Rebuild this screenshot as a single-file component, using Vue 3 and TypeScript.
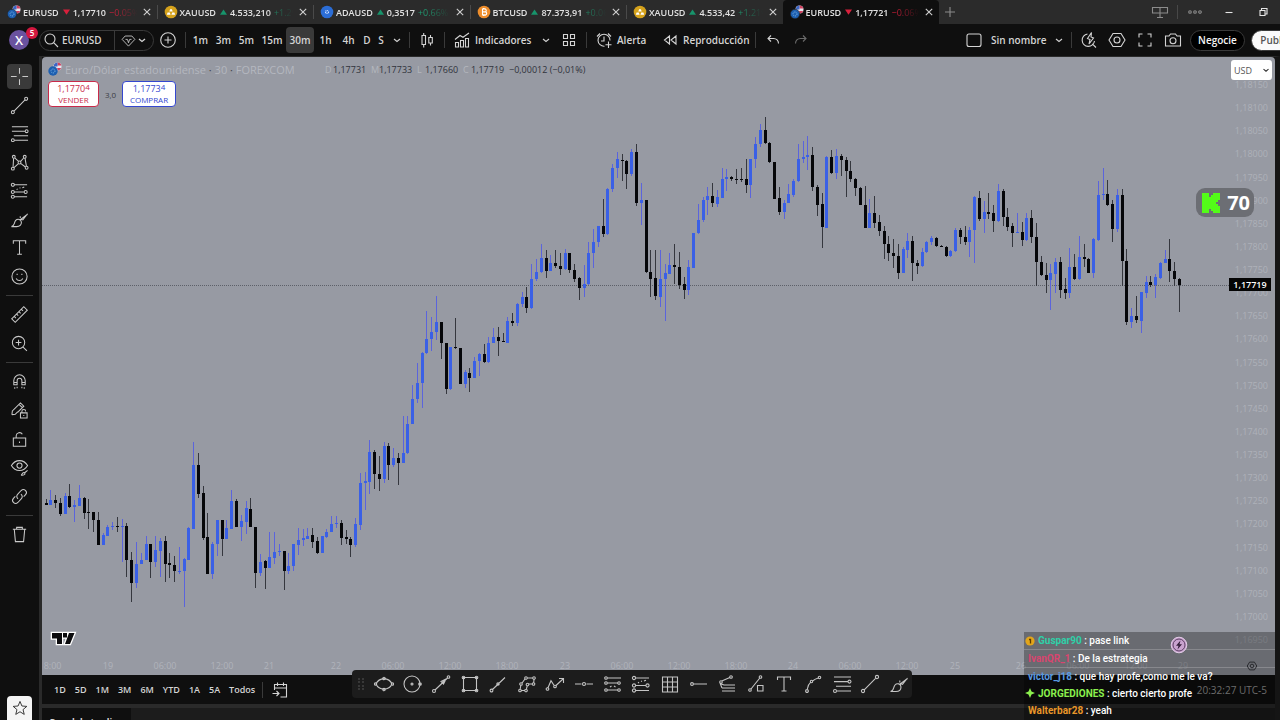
<script setup lang="ts">
interface Tab { symbol: string; up: boolean; price: string; change: string; kind: string; active?: boolean }
interface Candle { x: number; up: boolean; high: number; top: number; bottom: number; low: number }

const tabs: Tab[] = [
  { symbol: 'EURUSD', up: false, price: '1,17710', change: '−0.05%', kind: 'eur' },
  { symbol: 'XAUUSD', up: true, price: '4.533,210', change: '+1.2%', kind: 'gold' },
  { symbol: 'ADAUSD', up: true, price: '0,3517', change: '+0.66% A', kind: 'ada' },
  { symbol: 'BTCUSD', up: true, price: '87.373,91', change: '+0.06%', kind: 'btc' },
  { symbol: 'XAUUSD', up: true, price: '4.533,42', change: '+1.21%', kind: 'gold' },
  { symbol: 'EURUSD', up: false, price: '1,17721', change: '−0.06%', kind: 'eur', active: true },
]

const frames = ['1m', '3m', '5m', '15m', '30m', '1h', '4h', 'D', 'S']
const ranges = ['1D', '5D', '1M', '3M', '6M', 'YTD', '1A', '5A', 'Todos']

const ring = (x: number, y: number, r: number) =>
  `M${x - r} ${y}a${r} ${r} 0 1 0 ${2 * r} 0a${r} ${r} 0 1 0 ${-2 * r} 0`

const icons: Record<string, string> = {
  cross: 'M10 1v6M10 13v6M1 10h6M13 10h6',
  line: ring(3, 17, 1.6) + ring(17, 3, 1.6) + 'M4.2 15.8L15.8 4.2',
  fib: 'M2 3h17M2 7.6h14M4 12.3h15M5 17h14' + ring(17.5, 7.6, 1.5) + ring(3, 17, 1.5),
  pattern: ring(4, 4, 1.5) + ring(3, 16.5, 1.5) + ring(10, 10, 1.5) + ring(15.5, 4, 1.5) + ring(17.5, 15.5, 1.5) + 'M3.8 5.5L3.2 15M5 5.2l4 3.7M4.2 15.5l4.7-4.4M11 9l3.6-4M11.2 11l5 3.7M15.8 5.4l1.5 8.6',
  forecast: ring(3, 4, 1.6) + ring(3, 11.5, 1.6) + ring(3, 16.5, 1.6) + ring(16.5, 11.5, 1.6) + 'M5 4h13M5 11.5h10M5 16.5h13M7 9l1-.8M10 7.5l1-.4M13 7l2-.8',
  brush: 'M1.500 17.500c3.500-.5 2.500-4 4.500-6.500 2-2.300 6-1.300 6 2 0 3-2 4.500-5 4.500zM10.500 10.500l8-6M10.800 8.500V6.500M11 9.500l2.500.8L18.500 4',
  text: 'M3.5 6V3h13v3M10 3v14M7.500 17h5',
  smile: ring(10, 10, 8) + 'M6.500 12c1.500 3 5.500 3 7 0M7.500 7v1.500M12.500 7v1.500',
  ruler: 'M1.800 14.500L14.500 1.800l3.700 3.700L5.500 18.200zM4.500 12l1.700 1.700M7 9.500l1.700 1.700M9.500 7l1.700 1.700M12 4.500l1.700 1.700',
  zoom: ring(9, 9, 6.5) + 'M13.800 13.800l4 4M9 6v6M6 9h6',
  magnet: 'M4 13.500V9a6 6 0 0 1 12 0v4.500h-3.500V9a2.500 2.500 0 0 0-5 0v4.500zM4 11h3.500M12.500 11H16M5 16v1.500M7.500 15.500V17M12.500 15.500V17M15 16v1.500',
  pencilLock: 'M2 14.500l.5-4L11 2l3.500 3.500L8 12M2 14.500l3.500-.5L8 11.500M9.500 3.500L13 7M11 12.500h7v5.500h-7zM12.500 12.500v-1.500a2 2 0 0 1 4 0M14.500 14.800v1',
  unlock: 'M3.500 8.500h13v8.500h-13zM6.500 8.500V6a3.500 3.500 0 0 1 6.500-1.500M10 12v1.800',
  eye: 'M1.500 8c4-7 13-7 17 0-4 7-13 7-17 0z' + ring(10, 8, 2.7) + 'M11.500 18c1.500 0 1-2 2.500-2.500s2.500 1 1 2-2.500.6-3.500.5M15.500 15.500l3-2.500',
  link: 'M8.500 12.500c-1.800-1.500-1.800-3.500-.3-5l3.500-3.800c3-3 7.500 1.300 4.700 4.300l-2 2.200M11.500 7.500c1.800 1.500 1.800 3.500.3 5l-3.500 3.800c-3 3-7.500-1.300-4.700-4.300l2-2.200',
  trash: 'M3 4.500h14M7 4.500V2.500h6v2M4.500 4.500l1.200 13h8.600l1.200-13',
  star: 'M10 1.800l2.400 5.700 6.100.5-4.700 4 1.500 6-5.300-3.300L4.700 18l1.500-6-4.700-4 6.100-.5z',
  search: ring(9, 9, 5) + 'M12.700 12.700L17 17',
  gem: 'M5.500 4h9L18.500 8.500 10 17.500 1.500 8.500zM6 8.500h2.500l1.500 4.500 1.500-4.500H14',
  chevron: 'M7 9l3 2.500L13 9',
  plus: ring(10, 10, 7.3) + 'M10 6.500v7M6.500 10h7',
  candles: 'M5 5.500h3.500v9H5zM6.700 3v2.500M6.700 14.500V17.500M11.800 7.500h3.500v5.500h-3.500zM13.500 5v2.500M13.500 13v2.500',
  indicators: 'M3 9.500l5-4 3 1.800 6-4.300M3.500 12.500h3V17h-3zM8.500 10.500h3V17h-3zM13.500 8.500h3V17h-3z',
  grid: 'M4.500 4.500h4v4h-4zM11.500 4.500h4v4h-4zM4.500 11.500h4v4h-4zM11.500 11.500h4v4h-4z',
  alarm: 'M10.500 16.200A6 6 0 1 1 16 10.500M10 6.500V11H7M3 6.500l3-3M14 3.500l3 3M14.500 11.500v6.500M11.500 14.800h6',
  rewind: 'M9.500 6v8l-5-4zM16 6v8l-5-4z',
  undo: 'M15.500 13.500c0-3-2-5-5-5H5M8 5.500l-3 3 3 3',
  redo: 'M4.500 13.500c0-3 2-5 5-5H15M12 5.500l3 3-3 3',
  square: 'M5 4h10a2 2 0 0 1 2 2v8.500a2 2 0 0 1-2 2H5a2 2 0 0 1-2-2V6a2 2 0 0 1 2-2z',
  quick: 'M8.500 4A6.200 6.200 0 1 0 15.500 11M13.300 13.800l3.700 3.700M12.500 2.500L8.500 8.500l2.500 1-1 4.500 4.500-6-2.500-1z',
  hexagon: 'M6 3.500h8l4 6.500-4 6.500H6L2 10z' + ring(10, 10, 3),
  full: 'M4 7.500V4h3.500M12.500 4H16v3.500M16 12.500V16h-3.500M7.500 16H4v-3.500',
  camera: 'M2.500 6h3.500l1.500-2h5L14 6h3.500v10h-15z' + ring(10, 10.800, 3),
  calendar: 'M4.500 10V4.500h12V17h-6M4.500 8h12M7.500 2.500v3.500M13.500 2.500v3.500M2.500 13.500h6.500M6.500 11l2.500 2.500L6.500 16',
  monitor: 'M2.500 5.500h15v5.500h-15zM10 5.500v10M7 15.500h6',
  ellipse: 'M2 10c3-6.800 13-6.800 16 0-3 6.800-13 6.800-16 0z' + ring(1.500, 10, 1.2) + ring(18.500, 10, 1.2) + ring(10, 4.500, 1.2) + ring(10, 15.500, 1.2),
  circle: ring(10, 10, 8) + ring(10, 10, 1) + ring(18, 10, 1.3),
  arrow: ring(3, 17, 1.500) + ring(17.500, 3, 1.300) + 'M4 16L16.500 4M10 7.500l5-2.500L12.500 10zM11.500 7.500l1 1',
  rect: 'M3.500 3.500h13v13h-13z' + ring(3.500, 3.500, 1.3) + ring(16.500, 3.500, 1.3) + ring(3.500, 16.500, 1.3) + ring(16.500, 16.500, 1.3),
  trend: ring(3.500, 16.500, 1.4) + ring(10, 10, 1.2) + 'M4.500 15.500L17 3.500',
  path: ring(3, 16.500, 1.3) + ring(4, 10, 1.3) + ring(9, 4, 1.3) + ring(17, 4, 1.3) + ring(16.500, 10, 1.3) + ring(9, 16.500, 1.3) + ring(10.500, 10.500, 1.3) + 'M4.500 16.500h3M3.200 15l.6-3.500M5 9l3-4M10.500 4h5M17 5.500l-.3 3M15 10h-3M10.200 12l-.8 3',
  zigzag: ring(2.500, 15, 1.3) + ring(10, 12.500, 1.3) + 'M3 13.700l3-7 3.300 5M11 11.500L18 5M14 4.500h4.500V9',
  hline: 'M1 10h6.500M12.500 10H19' + ring(10, 10, 1.5),
  longPos: ring(3, 4, 1.300) + ring(3, 9, 1.300) + ring(3, 16, 1.300) + ring(16, 9, 1.300) + ring(16, 16, 1.3) + 'M4.500 4H18M4.500 9h10M4.500 16h10M7 13l1.500-1M11 12l1.500 1',
  table: 'M2.500 3h15v15h-15zM7.500 3v15M12.500 3v15M2.500 8h15M2.500 13h15',
  hray: ring(3, 10, 1.4) + 'M4.500 10H18',
  gann: ring(4, 8, 1.3) + ring(14, 3, 1.3) + 'M4.800 7L12.800 3.500M3 9.500l4 1.500h11M5 14h13M5 17h13M3 9l2 5',
  shape: ring(4, 16, 1.300) + ring(14.500, 3, 1.300) + 'M5 15L13.800 4M11.500 11.500h5.500v5.500h-5.500z',
  curve: ring(4, 17, 1.4) + ring(8.500, 7.500, 1.2) + ring(16.500, 3.500, 1.2) + 'M4.200 15.500c.5-4 2-6 3.500-7.300M9.500 7c2-1.500 4-2.500 5.800-3',
}

const tools = [
  ['cross', 'line', 'fib', 'pattern', 'forecast', 'brush', 'text', 'smile'],
  ['ruler', 'zoom'],
  ['magnet', 'pencilLock', 'unlock', 'eye', 'link'],
  ['trash'],
]
const favorites = ['ellipse', 'circle', 'arrow', 'rect', 'trend', 'path', 'zigzag', 'hline', 'longPos', 'forecast', 'table', 'hray', 'gann', 'shape', 'text', 'curve', 'fib', 'line', 'brush']

const priceLabels = Array.from({ length: 25 }, (_, i) => '1,' + String(18150 - i * 50))

const view = { left: 42, top: 57, width: 1233, height: 618 }
const times: [string, number][] = [
  ['18:00', 50], ['19', 108], ['06:00', 165], ['12:00', 222], ['21', 269], ['22', 336], ['06:00', 393], ['12:00', 450],
  ['18:00', 507], ['23', 565], ['06:00', 622], ['12:00', 679], ['18:00', 736], ['24', 793], ['06:00', 850], ['12:00', 907],
  ['25', 955], ['26', 1021], ['06:00', 1078], ['12:00', 1136], ['29', 1183],
]
const share = (x: number) => ((x - view.left) / view.width) * 100 + '%'

// One entry per half hour: direction, high, body top, body bottom, low.
const series = `
d499,503,505,505 u490,500,505,505 d495,500,503,508 d498,503,514,516 u493,496,514,514 d484,496,507,508 u500,505,507,522 u485,498,506,506
d497,498,513,519 d499,512,513,529 d512,512,520,532 d512,520,545,545 u533,535,545,545 u525,527,536,536 u522,526,527,530 d517,526,527,532
u519,526,527,562 d523,526,560,577 d552,560,583,602 u542,564,583,588 u553,560,564,564 u536,544,560,560 d544,544,562,578 u536,550,562,567
u538,541,551,577 d536,541,564,582 d553,563,565,578 d556,565,571,582 u547,571,572,574 u558,559,571,607 u527,528,560,560 u442,465,529,529
d453,465,494,498 d486,493,538,540 d513,537,574,574 u542,544,574,579 u520,520,544,556 d520,520,539,556 u520,528,539,539 u490,501,529,529
d499,501,527,527 u515,521,527,541 u501,508,522,534 d498,509,527,527 d527,527,573,588 u554,562,573,576 d560,561,568,589 u532,557,568,568
u532,552,558,564 u544,551,552,556 d551,551,571,590 u553,566,571,574 u544,544,566,571 u528,540,545,555 u529,538,540,546 u528,536,539,539
d528,535,542,548 d537,541,553,554 u536,536,553,553 u529,532,537,538 u516,524,532,532 u516,523,524,528 d520,523,538,545 d530,537,539,544
d537,539,545,557 u518,524,545,547 u473,483,525,530 u472,481,483,510 u440,452,482,494 d450,452,474,489 d456,474,479,491 u442,446,479,483
d443,446,465,480 u448,458,465,467 d453,458,463,485 u416,453,463,463 u416,424,453,454 u385,399,424,424 u363,383,399,403 u352,353,383,408
u311,339,353,354 u317,332,339,351 u296,322,332,340 d322,322,343,359 d343,343,389,394 u347,347,389,390 d318,347,348,349 d348,348,384,384
u370,372,384,388 d368,373,378,392 u357,361,378,378 u353,354,361,376 d344,354,362,363 u337,343,362,363 u328,337,343,343 d327,337,341,356
d333,341,342,342 u317,321,343,343 d313,321,323,326 u303,304,323,326 u292,297,304,307 d287,297,308,313 u264,279,308,309 u259,272,279,281
u244,258,272,273 d250,258,271,278 u255,263,271,271 d250,263,266,268 d253,266,269,275 u249,253,269,270 d253,253,270,273 d264,270,279,282
d277,278,288,300 u265,284,288,297 u242,253,284,285 u229,242,253,268 u226,226,242,247 d199,226,234,237 u188,189,234,235 u164,168,189,192
u152,159,168,178 d154,160,161,181 d160,161,174,189 u149,152,174,176 d144,152,203,206 u183,200,203,225 d200,200,272,273 d250,272,279,297
d250,278,296,300 u250,279,297,307 u264,273,279,321 u253,265,274,274 d244,265,267,284 d252,267,285,289 d277,284,290,299 u260,267,290,295
u233,233,268,268 u204,220,233,234 u197,200,220,222 u187,196,200,215 d183,196,203,207 u190,197,204,207 u168,179,198,198 u169,177,179,191
d176,177,179,181 d169,179,180,184 d168,179,180,182 d159,179,185,193 u159,159,185,198 u137,144,159,168 u124,130,144,147 d117,130,143,144
d142,143,162,163 d162,162,199,199 d187,198,212,215 u200,203,212,219 u184,194,203,203 u179,181,195,197 u144,159,181,182 u141,157,159,163
u136,155,157,170 d147,155,187,191 d185,187,205,216 d193,204,227,248 u156,157,228,228 d150,157,173,174 u149,156,173,179 d154,156,160,176
d157,160,171,197 d161,171,179,182 d178,179,188,196 d187,188,205,205 d186,205,228,228 u199,213,228,228 d196,213,223,228 d215,222,231,236
d226,231,244,259 d236,244,253,261 d239,253,256,268 d244,256,273,279 u247,249,273,273 u233,241,250,258 d236,241,263,281 d260,263,266,274
u248,252,266,267 u241,242,252,253 u236,238,242,245 d237,238,246,247 d245,246,247,247 d246,247,256,257 u250,251,256,257 u228,230,251,252
d228,230,237,244 d226,237,242,245 u227,230,242,257 u196,197,230,263 d191,198,219,221 u201,212,219,233 d193,212,214,219 d205,213,221,232
u184,191,221,222 d189,191,217,226 d208,217,227,231 d223,226,233,247 u213,232,233,233 d222,232,240,246 u213,218,240,241 d210,218,237,243
d223,237,262,286 d256,262,275,276 d263,275,280,293 u264,273,280,310 u258,262,274,293 d257,262,290,298 d278,289,293,299 u248,267,293,298
d254,267,279,280 u236,257,279,280 d244,257,259,267 d258,259,273,273 u238,239,273,278 u181,195,240,241 u168,194,195,200 d180,194,205,206
d200,204,229,242 u189,195,229,232 d189,195,261,286 d249,261,322,325 u308,316,322,328 d296,316,320,323 u292,292,321,333 u276,282,293,298
d276,282,285,287 u274,277,285,298 u262,263,278,279 u250,259,263,263 d239,259,271,282 d262,271,279,286 d278,279,285,312`

const candles: Candle[] = series.trim().split(/\s+/).map((entry, i) => {
  const [high, top, bottom, low] = entry.slice(1).split(',').map(Number)
  return { x: Math.round(44.5 + i * 4.762), up: entry[0] === 'u', high, top, bottom, low }
})
const bodies = (up: boolean) =>
  candles.filter(c => c.up === up).map(c => `M${c.x} ${c.top}h3v${Math.max(1, c.bottom - c.top)}h-3z`).join('')
const wicks = (up: boolean) =>
  candles.filter(c => c.up === up).map(c => `M${c.x + 1} ${c.high}h1V${c.low}h-1z`).join('')

const chat = [
  { user: 'Guspar90', color: '#2fd0a8', text: 'pase link', badge: 'coin' },
  { user: 'IvanQR_1', color: '#d8456f', text: 'De la estrategia', badge: '' },
  { user: 'victor_j18', color: '#5b9be0', text: 'que hay profe,como me le va?', badge: '' },
  { user: 'JORGEDIONES', color: '#8bf04e', text: 'cierto cierto profe', badge: 'spark' },
  { user: 'Walterbar28', color: '#e8962a', text: 'yeah', badge: '' },
]
</script>

<template>
  <div class="app">
    <header class="tabbar">
      <nav class="tabs">
        <div v-for="(t, i) in tabs" :key="i" class="tab" :class="{ active: t.active }">
          <a href="#" class="tab-link">
            <svg class="coin" viewBox="0 0 14 14" aria-hidden="true">
              <template v-if="t.kind === 'eur'">
                <circle cx="9.500" cy="4.500" r="4" fill="#e9e4ee" />
                <path d="M9.500 .5a4 4 0 0 1 3.900 3H9.500zM9 6h4.200A4 4 0 0 1 10 8.500z" fill="#d0405e" />
                <path d="M6 2.500A4 4 0 0 1 9.500 .5v4H6z" fill="#3b66c4" />
                <circle cx="5" cy="9" r="4.700" fill="#1d5fb0" stroke="#202020" stroke-width=".6" />
                <circle cx="5" cy="9" r="2" fill="none" stroke="#79b4e8" stroke-dasharray="1 .8" />
              </template>
              <template v-else-if="t.kind === 'gold'">
                <circle cx="7" cy="7" r="6.300" fill="#d5a21c" />
                <path d="M5.300 6.500l.8-2.200h1.800l.8 2.200zM2.800 9.700l.8-2.300h2.200l.8 2.300zM7.400 9.700l.8-2.300h2.200l.8 2.300z" fill="#fff" />
              </template>
              <template v-else-if="t.kind === 'ada'">
                <circle cx="7" cy="7" r="6.300" fill="#2b6dd6" />
                <circle cx="7" cy="7" r="1.500" fill="none" stroke="#cfe0ff" stroke-width="1.200" stroke-dasharray="1 .6" />
              </template>
              <template v-else>
                <circle cx="7" cy="7" r="6.300" fill="#ef8e2c" />
                <path d="M5.500 4h2.300a1.400 1.400 0 0 1 0 2.900H5.500zM5.500 6.900h2.700a1.500 1.500 0 0 1 0 3H5.500zM6.500 3v1M6.500 10v1M8 3v1M8 10v1" fill="none" stroke="#fff" stroke-width="1.100" />
              </template>
            </svg>
            <b>{{ t.symbol }}</b>
            <svg class="tri" viewBox="0 0 8 6" aria-hidden="true">
              <path :d="t.up ? 'M0 6L4 0l4 6z' : 'M0 0h8L4 6z'" :fill="t.up ? '#17936b' : '#d8203c'" />
            </svg>
            <span class="tab-price">{{ t.price }}</span>
            <span class="tab-change" :class="t.up ? 'up' : 'down'">{{ t.change }}</span>
          </a>
          <button class="tab-close" aria-label="Cerrar">
            <svg viewBox="0 0 8 8"><path d="M.8 .8l6.400 6.400M7.200 .8L.8 7.200" /></svg>
          </button>
        </div>
      </nav>
      <button class="win add" aria-label="Nueva pestaña"><svg viewBox="0 0 20 20"><path d="M10 5v10M5 10h10" /></svg></button>
      <div class="spacer"></div>
      <button class="win layout" aria-label="Pantallas"><svg viewBox="0 0 20 20"><path :d="icons.monitor" /></svg></button>
      <i class="bar"></i>
      <button class="win dots" aria-label="Más">
        <svg viewBox="0 0 20 20"><path :d="ring(5, 10, 1.300) + ring(10, 10, 1.300) + ring(15, 10, 1.300)" /></svg>
      </button>
      <button class="win bright" aria-label="Minimizar"><svg viewBox="0 0 20 20"><path d="M6.500 10.500h7" /></svg></button>
      <button class="win bright" aria-label="Restaurar"><svg viewBox="0 0 20 20"><path d="M7 8.500h5v5H7zM8.500 8.500V6.500H14V12h-2" /></svg></button>
    </header>

    <div class="toolbar">
      <div class="avatar-cell">
        <button class="avatar" aria-label="Perfil">X</button>
        <span class="badge">5</span>
      </div>
      <div class="search">
        <button class="search-main"><svg class="ic" viewBox="0 0 20 20"><path :d="icons.search" /></svg><b>EURUSD</b></button>
        <button class="search-gem" aria-label="Opciones del símbolo">
          <svg class="ic" viewBox="0 0 20 20"><path :d="icons.gem" /></svg>
          <svg class="mini" viewBox="4 4 12 12"><path :d="icons.chevron" /></svg>
        </button>
      </div>
      <button class="sq" aria-label="Comparar"><svg class="ic" viewBox="0 0 20 20"><path :d="icons.plus" /></svg></button>
      <i class="sep"></i>
      <button v-for="f in frames" :key="f" class="tf" :class="['tf-' + f.length, { on: f === '30m' }]">{{ f }}</button>
      <button class="chev" aria-label="Intervalos"><svg class="ic" viewBox="0 0 20 20"><path :d="icons.chevron" /></svg></button>
      <i class="sep"></i>
      <button class="sq" aria-label="Velas"><svg class="ic" viewBox="0 0 20 20"><path :d="icons.candles" /></svg></button>
      <i class="sep"></i>
      <button class="labelled w-ind"><svg class="ic" viewBox="0 0 20 20"><path :d="icons.indicators" /></svg>Indicadores</button>
      <button class="chev" aria-label="Favoritos"><svg class="ic" viewBox="0 0 20 20"><path :d="icons.chevron" /></svg></button>
      <button class="sq" aria-label="Plantillas"><svg class="ic" viewBox="0 0 20 20"><path :d="icons.grid" /></svg></button>
      <i class="sep"></i>
      <button class="labelled w-alert"><svg class="ic" viewBox="0 0 20 20"><path :d="icons.alarm" /></svg>Alerta</button>
      <button class="labelled w-replay"><svg class="ic" viewBox="0 0 20 20"><path :d="icons.rewind" /></svg>Reproducción</button>
      <i class="sep"></i>
      <button class="sq" aria-label="Deshacer"><svg class="ic" viewBox="0 0 20 20"><path :d="icons.undo" /></svg></button>
      <button class="sq dim" aria-label="Rehacer"><svg class="ic" viewBox="0 0 20 20"><path :d="icons.redo" /></svg></button>
      <div class="spacer"></div>
      <button class="labelled w-name"><svg class="ic" viewBox="0 0 20 20"><path :d="icons.square" /></svg>Sin nombre</button>
      <button class="chev" aria-label="Diseños"><svg class="ic" viewBox="0 0 20 20"><path :d="icons.chevron" /></svg></button>
      <i class="sep"></i>
      <button class="sq" aria-label="Búsqueda rápida"><svg class="ic" viewBox="0 0 20 20"><path :d="icons.quick" /></svg></button>
      <button class="sq" aria-label="Ajustes"><svg class="ic" viewBox="0 0 20 20"><path :d="icons.hexagon" /></svg></button>
      <button class="sq" aria-label="Pantalla completa"><svg class="ic" viewBox="0 0 20 20"><path :d="icons.full" /></svg></button>
      <button class="sq" aria-label="Captura"><svg class="ic" viewBox="0 0 20 20"><path :d="icons.camera" /></svg></button>
      <button class="pill">Negocie</button>
      <button class="pill light">Publicar</button>
    </div>

    <div class="body">
      <aside class="tools">
        <div v-for="(group, gi) in tools" :key="gi" class="tool-group" :class="'g' + gi">
          <button v-for="name in group" :key="name" class="tool" :class="{ on: name === 'cross' }" :aria-label="name">
            <svg class="ic" viewBox="0 0 20 20"><path :d="icons[name]" /></svg>
          </button>
        </div>
        <div class="spacer"></div>
        <button class="tool fav" aria-label="Favoritos"><svg class="ic" viewBox="0 0 20 20"><path :d="icons.star" /></svg></button>
      </aside>

      <main class="main">
        <section class="chart">
          <svg class="plot" :viewBox="`${view.left} ${view.top} ${view.width} ${view.height}`" preserveAspectRatio="none" aria-hidden="true">
            <path d="M42 285.500H1230" stroke="#5d6069" stroke-dasharray="1 1" fill="none" />
            <path :d="wicks(true)" fill="#5b64dc" />
            <path :d="wicks(false)" fill="#35373e" />
            <path :d="bodies(true)" fill="#3a60e6" />
            <path :d="bodies(false)" fill="#06070a" />
          </svg>

          <div class="legend">
            <svg class="coin" viewBox="0 0 14 14" aria-hidden="true">
              <circle cx="9.500" cy="4.500" r="4" fill="#e9e4ee" />
              <path d="M9.500 .5a4 4 0 0 1 3.900 3H9.500zM9 6h4.200A4 4 0 0 1 10 8.500z" fill="#d0405e" />
              <path d="M6 2.500A4 4 0 0 1 9.500 .5v4H6z" fill="#3b66c4" />
              <circle cx="5" cy="9" r="4.700" fill="#1d5fb0" />
              <circle cx="5" cy="9" r="2" fill="none" stroke="#79b4e8" stroke-dasharray="1 .8" />
            </svg>
            <span class="title">Euro/Dólar estadounidense <i>·</i> 30 <i>·</i> FOREXCOM</span>
            <span class="ohlc"><em>D</em>1,17731</span>
            <span class="ohlc"><em>M</em>1,17733</span>
            <span class="ohlc"><em>L</em>1,17660</span>
            <span class="ohlc"><em>C</em>1,17719</span>
            <span class="delta">−0,00012 (−0,01%)</span>
          </div>
          <div class="trade">
            <button class="order sell"><span>1,1770<sup>4</sup></span>VENDER</button>
            <span class="spread">3,0</span>
            <button class="order buy"><span>1,1773<sup>4</sup></span>COMPRAR</button>
          </div>

          <div class="prices"><span v-for="p in priceLabels" :key="p">{{ p }}</span></div>
          <span class="last">1,17719</span>
          <label class="currency">
            <select aria-label="Divisa"><option>USD</option></select>
            <svg class="mini" viewBox="4 4 12 12"><path :d="icons.chevron" /></svg>
          </label>

          <div class="times"><span v-for="([label, x], i) in times" :key="i" :style="{ left: share(x) }">{{ label }}</span></div>

          <svg class="logo" viewBox="0 0 26 16" role="img" aria-label="TradingView">
            <path d="M2 2h10v11H7V7.500H2zM13 2h4v4.500h-4zM19 2h5.500L20 13h-5z" fill="#0b0b0d" stroke="#fff" stroke-width="2.600" paint-order="stroke" />
          </svg>

          <div class="viewers">
            <svg viewBox="0 0 18 20" aria-hidden="true"><path d="M0 0h7v4h2V2h2V0h7v7h-2v2h-2v2h2v2h2v7h-7v-2H9v-2H7v4H0z" fill="#53fc18" /></svg>
            <b>70</b>
          </div>
        </section>

        <footer class="rangebar">
          <button v-for="r in ranges" :key="r" class="range">{{ r }}</button>
          <i class="sep"></i>
          <button class="sq" aria-label="Ir a la fecha"><svg class="ic" viewBox="0 0 20 20"><path :d="icons.calendar" /></svg></button>
          <div class="spacer"></div>
          <span class="clock">20:32:27 UTC-5</span>
        </footer>
        <div class="panel"><button class="panel-tab">Panel de trading</button></div>

        <div class="favbar">
          <svg class="grip" viewBox="0 0 8 12" aria-hidden="true"><path d="M1 1h2M5 1h2M1 4h2M5 4h2M1 8h2M5 8h2M1 11h2M5 11h2" /></svg>
          <button v-for="(name, i) in favorites" :key="i" :aria-label="name"><svg class="ic" viewBox="0 0 20 20"><path :d="icons[name]" /></svg></button>
        </div>
      </main>
    </div>

    <div class="chat">
      <p v-for="m in chat" :key="m.user">
        <svg v-if="m.badge === 'coin'" class="cb" viewBox="0 0 10 10" aria-hidden="true"><circle cx="5" cy="5" r="4.600" fill="#e2a51b" /><path d="M4 3.500h1.500v4" stroke="#5c3b00" fill="none" stroke-width="1.300" /></svg>
        <svg v-if="m.badge === 'spark'" class="cb" viewBox="0 0 10 10" aria-hidden="true"><path d="M5 0l1.500 3.500L10 5 6.500 6.500 5 10 3.500 6.500 0 5l3.500-1.500z" fill="#8bf04e" /></svg>
        <b :style="{ color: m.color }">{{ m.user }}</b>&nbsp;: {{ m.text }}
      </p>
      <svg class="bolt" viewBox="0 0 18 18" aria-hidden="true"><circle cx="9" cy="9" r="7.800" fill="#c9a3cf" stroke="#e2cbe6" /><circle cx="9" cy="9" r="6" fill="none" stroke="#5e3f66" /><path d="M10.500 4.500L6 9.800h2.500L7.500 13.500 12 8.200H9.500z" fill="#35203b" /></svg>
      <svg class="gear" viewBox="0 0 20 20" aria-hidden="true"><path :d="icons.hexagon" /></svg>
    </div>
  </div>
</template>

<style>
html, body { margin: 0; background: #0f0f0f; overflow: hidden; }
</style>

<style scoped>
* { box-sizing: border-box; }
.app { position: relative; display: flex; flex-direction: column; height: 100vh; overflow: hidden; background: #0f0f0f; color: #d4d4d4; font-family: "Open Sans", "Noto Sans", sans-serif; font-size: 10px; }
button { margin: 0; padding: 0; border: 0; background: none; color: inherit; font: inherit; display: flex; align-items: center; justify-content: center; flex: none; }
svg { display: block; flex: none; }
.ic { width: 20px; height: 20px; fill: none; stroke: currentColor; stroke-width: 1.1; }
.mini { width: 12px; height: 12px; fill: none; stroke: currentColor; stroke-width: 1.3; }
.spacer { flex: 1; }

.tabbar { display: flex; align-items: center; height: 24px; flex: none; background: #2b2b2b; }
.tabs { display: flex; flex: 0 1 939px; min-width: 0; height: 24px; }
.tab { flex: 1 1 0; min-width: 0; display: flex; align-items: center; padding: 0 3px 0 7px; position: relative; }
.tab + .tab::before { content: ""; position: absolute; left: 0; top: 5px; height: 14px; width: 1px; background: #4a4a4a; }
.tab.active { background: #0f0f0f; border-radius: 4px 4px 0 0; }
.tab + .tab.active::before { display: none; }
.tab-link { flex: 1; min-width: 0; display: flex; align-items: center; color: #e2e2e2; text-decoration: none; white-space: nowrap; overflow: hidden; -webkit-mask-image: linear-gradient(90deg, #000 78%, transparent 98%); mask-image: linear-gradient(90deg, #000 78%, transparent 98%); }
.tab-link b { font-size: 9px; font-weight: 600; margin: 0 4px 0 2px; }
.coin { width: 14px; height: 14px; }
.tri { width: 7px; height: 6px; margin-right: 3px; }
.tab-price { font-size: 9px; font-weight: 600; margin-right: 3px; }
.tab-change { font-size: 9px; }
.up { color: #1f9d73; }
.down { color: #d8203c; }
.tab-close { width: 14px; height: 16px; }
.tab-close svg { width: 8px; height: 8px; stroke: #d0d0d0; stroke-width: 1.1; fill: none; }
.win { width: 34px; height: 24px; }
.win svg { width: 20px; height: 20px; fill: none; stroke: #8c8c8c; stroke-width: 1.1; }
.win.add { width: 22px; }
.win.bright svg { stroke: #e6e6e6; }
.bar { width: 1px; height: 14px; background: #484848; }

.toolbar { display: flex; align-items: center; height: 32px; flex: none; background: #0f0f0f; font-weight: 600; overflow: hidden; }
.avatar-cell { position: relative; width: 39px; padding-left: 9px; flex: none; }
.avatar { width: 20px; height: 20px; border-radius: 50%; background: #6a529f; color: #fff; font-size: 13px; }
.badge { position: absolute; left: 26px; top: -3px; width: 12px; height: 12px; border-radius: 50%; background: #d3173f; color: #fff; font-size: 8px; line-height: 12px; text-align: center; }
.search { display: flex; width: 115px; height: 21px; border: 1px solid #3a3a3a; border-radius: 11px; flex: none; }
.search-main { width: 75px; padding-left: 1px; justify-content: flex-start; border-right: 1px solid #3a3a3a; }
.search-main b { margin-left: 1px; font-weight: 600; }
.search-gem { flex: 1; }
.search-gem .ic { width: 15px; height: 15px; }
.sq { width: 28px; height: 28px; }
.dim { color: #6a6a6a; }
.sep { width: 1px; height: 16px; margin: 0 3px; background: #3a3a3a; flex: none; }
.tf { height: 26px; border-radius: 4px; }
.tf-1 { width: 14px; }
.tf-2 { width: 23px; }
.tf-3 { width: 28px; }
.tf.on { background: #3a3a3a; }
.chev { width: 18px; height: 26px; }
.labelled { justify-content: flex-start; gap: 3px; padding-left: 4px; white-space: nowrap; }
.w-ind { width: 89px; }
.w-alert { width: 66px; }
.w-replay { width: 96px; }
.w-name { width: 86px; padding-left: 0; gap: 7px; }
.pill { height: 21px; width: 55px; margin-left: 3px; border-radius: 11px; background: #000; border: 1px solid #3a3a3a; color: #f5f5f5; font-weight: 600; }
.pill.light { width: 58px; margin: 0 -29px 0 6px; background: #fafafa; color: #555; }

.body { display: flex; flex: 1; min-height: 0; }
.tools { width: 39px; flex: none; display: flex; flex-direction: column; align-items: center; padding-top: 8px; background: #0f0f0f; color: #c9c9c9; }
.tool-group { display: flex; flex-direction: column; justify-content: space-between; align-items: center; width: 27px; }
.tool-group + .tool-group { border-top: 1px solid #3a3a3a; padding-top: 6px; margin-top: 6px; }
.g0 { height: 225px; }
.g1 { height: 61px; }
.g2 { height: 147px; }
.tool { width: 25px; height: 25px; border-radius: 4px; }
.tool.on { background: #3a3a3a; }
.tool.fav { background: #f4f4f4; color: #222; height: 24px; border-radius: 4px 4px 0 0; }
.tool .ic { width: 19px; height: 19px; }
.tool.fav .ic { width: 16px; height: 16px; }

.main { position: relative; flex: 1; min-width: 0; display: flex; flex-direction: column; border-left: 3px solid #2a2a2a; border-right: 5px solid #151515; border-top: 1px solid #2a2a2a; }
.chart { position: relative; flex: 1; min-height: 0; background: #979aa3; border-radius: 4px 4px 0 0; overflow: hidden; }
.plot { position: absolute; inset: 0; width: 100%; height: 100%; }
.legend { position: absolute; left: 6px; top: 4px; display: flex; align-items: center; height: 16px; white-space: nowrap; }
.title { margin-left: 3px; font-size: 11px; color: #b4b7bf; width: 260px; }
.title i { color: #44464d; font-style: normal; }
.ohlc { font-size: 9px; color: #30333c; width: 46px; }
.ohlc em { font-style: normal; color: #b4b7be; display: inline-block; width: 8px; }
.delta { font-size: 9px; color: #30333c; }
.trade { position: absolute; left: 6px; top: 24px; display: flex; align-items: center; }
.order { flex-direction: column; height: 26px; background: #fff; border-radius: 4px; border: 1px solid; font-size: 8px; line-height: 11px; }
.order span { font-size: 9px; }
.order sup { font-size: 8px; line-height: 0; vertical-align: 2px; }
.sell { width: 51px; color: #c92a49; }
.buy { width: 54px; color: #3447cf; }
.spread { width: 23px; text-align: center; font-size: 8px; color: #3b3d45; }
.prices { position: absolute; right: 7px; top: 21px; bottom: 28px; display: flex; flex-direction: column; justify-content: space-between; color: #aeb1b9; font-size: 9px; line-height: 14px; }
.last { position: absolute; right: 4px; top: 221px; width: 42px; height: 13px; background: #050505; color: #fff; font-size: 9px; font-weight: 600; line-height: 13px; text-align: center; }
.currency { position: absolute; right: 3px; top: 3px; width: 41px; height: 20px; background: #fff; border-radius: 3px; color: #333; }
.currency select { width: 100%; height: 100%; border: 0; background: none; appearance: none; padding: 0 3px; font: 9px "Open Sans", sans-serif; color: #555; }
.currency .mini { position: absolute; right: 1px; top: 4px; width: 10px; height: 12px; }
.times { position: absolute; inset: auto 0 2px 0; height: 14px; font-size: 9px; line-height: 14px; color: #b0b3bb; }
.times span { position: absolute; transform: translateX(-50%); }
.logo { position: absolute; left: 8px; bottom: 28px; width: 26px; height: 16px; overflow: visible; }
.viewers { position: absolute; right: 21px; top: 131px; width: 58px; height: 29px; display: flex; align-items: center; justify-content: flex-end; gap: 7px; padding-right: 4px; border-radius: 9px; background: #6c6e74; color: #fff; }
.viewers svg { width: 18px; height: 20px; }
.viewers b { font: 700 20px "Open Sans", sans-serif; }

.rangebar { display: flex; align-items: center; gap: 9px; height: 29px; flex: none; padding: 0 8px 0 12px; background: #0f0f0f; font-size: 10px; font-weight: 600; }
.range { font-size: 9px; }
.rangebar .sep { margin: 0 -2px; }
.rangebar .sq { width: 20px; }
.clock { color: #9a9a9a; font-weight: 400; }
.panel { height: 16px; flex: none; border-top: 4px solid #2a2a2a; background: #1c1c1c; overflow: hidden; }
.panel-tab { background: #0f0f0f; width: 89px; height: 26px; font-size: 9px; font-weight: 700; white-space: nowrap; }
.favbar { position: absolute; left: 310px; bottom: 22px; width: 560px; height: 28px; display: flex; align-items: center; justify-content: space-between; padding: 0 3px 0 5px; background: #1c1c1c; border-radius: 4px; color: #c4c4c4; }
.grip { width: 8px; height: 12px; stroke: #555; stroke-width: 1; }

.chat { position: absolute; right: 5px; bottom: 0; width: 251px; height: 88px; background: rgba(0, 0, 0, .3); font-family: Roboto, sans-serif; font-size: 10px; font-weight: 500; color: #fff; overflow: hidden; }
.chat p { margin: 0; height: 18px; padding: 0 4px; display: flex; align-items: center; border-bottom: 1px solid rgba(255, 255, 255, .2); white-space: nowrap; }
.chat p:nth-child(n+3) { border-color: transparent; height: 17px; }
.chat b { font-weight: 700; }
.cb { width: 10px; height: 10px; margin: 0 3px 0 -3px; }
.bolt { position: absolute; left: 146px; top: 4px; width: 18px; height: 18px; }
.gear { position: absolute; right: 17px; top: 28px; width: 12px; height: 12px; fill: none; stroke: #26272b; stroke-width: 1.6; }
</style>
